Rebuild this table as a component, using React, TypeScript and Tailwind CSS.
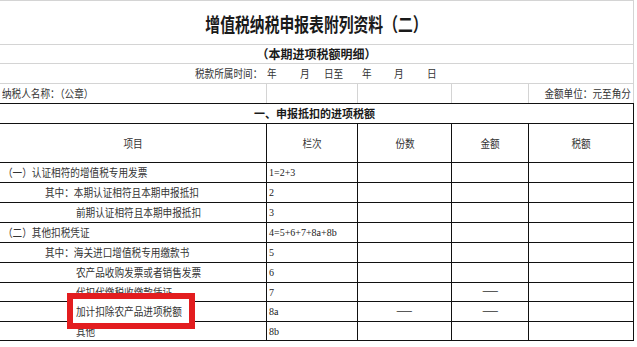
import React from 'react';

const T: React.FC<{ children: React.ReactNode; className?: string }> = ({ children, className = 'origin-left' }) => (
  <span className={`inline-block whitespace-nowrap scale-x-[0.875] ${className}`}>{children}</span>
);

const rows = [
  { label: '（一）认证相符的增值税专用发票', pad: 'pl-[3px]', no: '1=2+3', h: 'h-[20px]' },
  { label: '其中：本期认证相符且本期申报抵扣', pad: 'pl-[45px]', no: '2', h: 'h-[20px]' },
  { label: '前期认证相符且本期申报抵扣', pad: 'pl-[76px]', no: '3', h: 'h-[20px]' },
  { label: '（二）其他扣税凭证', pad: 'pl-[3px]', no: '4=5+6+7+8a+8b', h: 'h-[20px]' },
  { label: '其中：海关进口增值税专用缴款书', pad: 'pl-[45px]', no: '5', h: 'h-[20px]' },
  { label: '农产品收购发票或者销售发票', pad: 'pl-[76px]', no: '6', h: 'h-[20px]' },
  { label: '代扣代缴税收缴款凭证', pad: 'pl-[76px]', no: '7', h: 'h-[19px]', amountDash: true },
  { label: '加计扣除农产品进项税额', pad: 'pl-[76px]', no: '8a', h: 'h-[20px]', countDash: true, amountDash: true, mark: true },
  { label: '其他', pad: 'pl-[76px]', no: '8b', h: 'h-[19px]' },
];

const App: React.FC = () => {
  return (
    <div className="relative w-[637px] h-[347px] bg-white overflow-hidden text-[11px] text-[#333] font-[family-name:'Noto_Sans_CJK_SC',sans-serif]">
      <div className="w-[634px]">
        {/* title */}
        <div className="h-[45px] border-t border-b border-r border-[#d4d4d4] flex items-center justify-center pt-[3px]">
          <span className="inline-block whitespace-nowrap scale-x-[0.78] text-[19px] font-semibold text-[#1a1a1a]">
            增值税纳税申报表附列资料（二）
          </span>
        </div>
        <div className="h-[19px] border-b border-r border-[#d4d4d4] flex items-center justify-center">
          <span className="inline-block whitespace-nowrap text-[12px] font-bold text-[#1a1a1a]">（本期进项税额明细）</span>
        </div>
        <div className="h-[20px] border-b border-r border-[#d4d4d4] flex items-center pl-[195px]">
          <div className="w-[72px]"><T>税款所属时间：</T></div>
          <div className="w-[33px]"><T>年</T></div>
          <div className="w-[24px]"><T>月</T></div>
          <div className="w-[38px]"><T>日至</T></div>
          <div className="w-[32px]"><T>年</T></div>
          <div className="w-[33px]"><T>月</T></div>
          <div><T>日</T></div>
        </div>
        <div className="h-[20px] border-b border-b-[#111] flex">
          <div className="w-[266px] flex items-center pl-[2px]"><T>纳税人名称：（公章）</T></div>
          <div className="w-[91px] border-l border-[#d4d4d4]" />
          <div className="w-[94px] border-l border-[#d4d4d4]" />
          <div className="w-[77px] border-l border-[#d4d4d4]" />
          <div className="w-[106px] border-l border-r border-[#d4d4d4] flex items-center justify-end pr-[2px]">
            <T className="origin-right">金额单位：元至角分</T>
          </div>
        </div>

        {/* table */}
        <div className="h-[20px] border-b border-r border-[#111] flex items-center justify-center pr-[4px]">
          <span className="inline-block whitespace-nowrap text-[11px] font-bold text-[#1a1a1a]">一、申报抵扣的进项税额</span>
        </div>
        <div className="h-[39px] border-b border-[#111] flex">
          <div className="w-[266px] flex items-center justify-center"><T className="origin-center">项目</T></div>
          <div className="w-[91px] border-l border-[#111] flex items-center justify-center"><T className="origin-center">栏次</T></div>
          <div className="w-[94px] border-l border-[#111] flex items-center justify-center"><T className="origin-center">份数</T></div>
          <div className="w-[77px] border-l border-[#111] flex items-center justify-center"><T className="origin-center">金额</T></div>
          <div className="w-[106px] border-l border-r border-[#111] flex items-center justify-center"><T className="origin-center">税额</T></div>
        </div>
        {rows.map((r) => (
          <div key={r.no} className={`${r.h} border-b border-[#111] flex`}>
            <div className={`w-[266px] flex items-center ${r.pad}`}>
              <span className={r.mark ? 'relative z-10' : ''}>
                <T>{r.label}</T>
              </span>
            </div>
            <div className="w-[91px] border-l border-[#111] flex items-center pl-[2px] text-[10px] text-[#222] font-[family-name:'Liberation_Serif',serif]">
              {r.no}
            </div>
            <div className="w-[94px] border-l border-[#111] flex items-center justify-center pb-[3px]">
              {r.countDash && <T className="origin-center">——</T>}
            </div>
            <div className="w-[77px] border-l border-[#111] flex items-center justify-center pb-[3px]">
              {r.amountDash && <T className="origin-center">——</T>}
            </div>
            <div className="w-[106px] border-l border-r border-[#111]" />
          </div>
        ))}
      </div>

      {/* annotation box */}
      <div className="absolute left-[67px] top-[293px] w-[128px] h-[36px] border-[6px] border-[#e31d1f] bg-white z-[5]" />
    </div>
  );
};

export default App;
